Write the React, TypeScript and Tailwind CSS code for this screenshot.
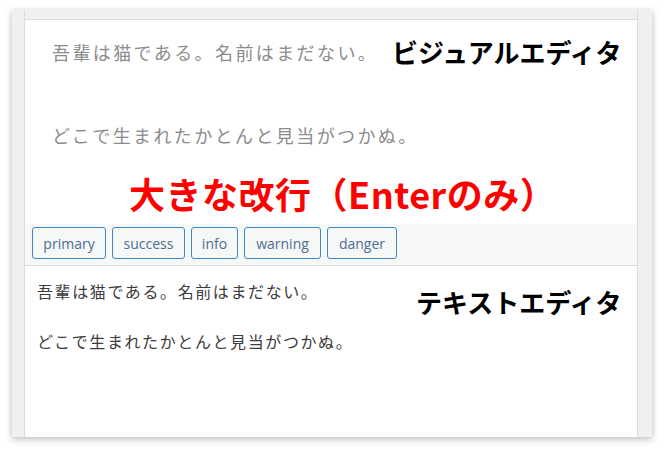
import React from "react";

const jp = '"Noto Sans CJK JP", "Noto Sans", sans-serif';

export default function App() {
  const buttons: { label: string; w: string }[] = [
    { label: "primary", w: "w-[74px]" },
    { label: "success", w: "w-[73px]" },
    { label: "info", w: "w-[47px]" },
    { label: "warning", w: "w-[77px]" },
    { label: "danger", w: "w-[70px]" },
  ];
  return (
    <div className="w-[664px] h-[451px] bg-white pt-[10px] pl-[12px]" style={{ fontFamily: jp }}>
      <div className="w-[640px] h-[427px] flex bg-[#f0f0f0] shadow-[0_2px_7px_rgba(0,0,0,0.28)]">
        <div className="w-[13px] border-r border-[#dcdcde]" />
        <div className="flex-1 flex flex-col bg-white">
          <div className="h-[10px] bg-[#f0f0f0] border-b border-[#dcdcde]" />
          <div className="relative h-[204px] pt-[20px] pl-[27px] text-[18px] leading-[24px] tracking-[2.4px] text-[#8c8c8c]">
            <p>吾輩は猫である。名前はまだない。</p>
            <p className="mt-[59px]">どこで生まれたかとんと見当がつかぬ。</p>
            <div className="absolute left-[367px] top-[16px] text-[26px] leading-[32px] font-bold text-black tracking-normal">
              ビジュアルエディタ
            </div>
            <div className="absolute left-[104px] top-[152px] text-[36px] leading-[42px] font-bold text-[#ff0000] tracking-[0.5px]">
              大きな改行（Enterのみ）
            </div>
          </div>
          <div className="h-[42px] bg-[#f6f7f7] border-b border-[#dcdcde] flex items-start gap-[6px] pl-[7px] pt-[3px]">
            {buttons.map((b) => (
              <div
                key={b.label}
                className={`${b.w} h-[32px] flex items-center justify-center rounded-[3px] border border-[#3f86c8] bg-[#f6f7f7] text-[14px] text-[#4d6e93]`}
                style={{ fontFamily: '"Open Sans", "Noto Sans", sans-serif' }}
              >
                {b.label}
              </div>
            ))}
          </div>
          <div className="relative flex-1 pt-[14px] pl-[12px] text-[16px] leading-[22px] tracking-[1.6px] text-[#3c3c3c]">
            <p>吾輩は猫である。名前はまだない。</p>
            <p className="mt-[28px]">どこで生まれたかとんと見当がつかぬ。</p>
            <div className="absolute left-[391px] top-[20px] text-[26px] leading-[32px] font-bold text-black tracking-normal">
              テキストエディタ
            </div>
          </div>
        </div>
        <div className="w-[15px] border-l border-[#dcdcde]" />
      </div>
    </div>
  );
}
